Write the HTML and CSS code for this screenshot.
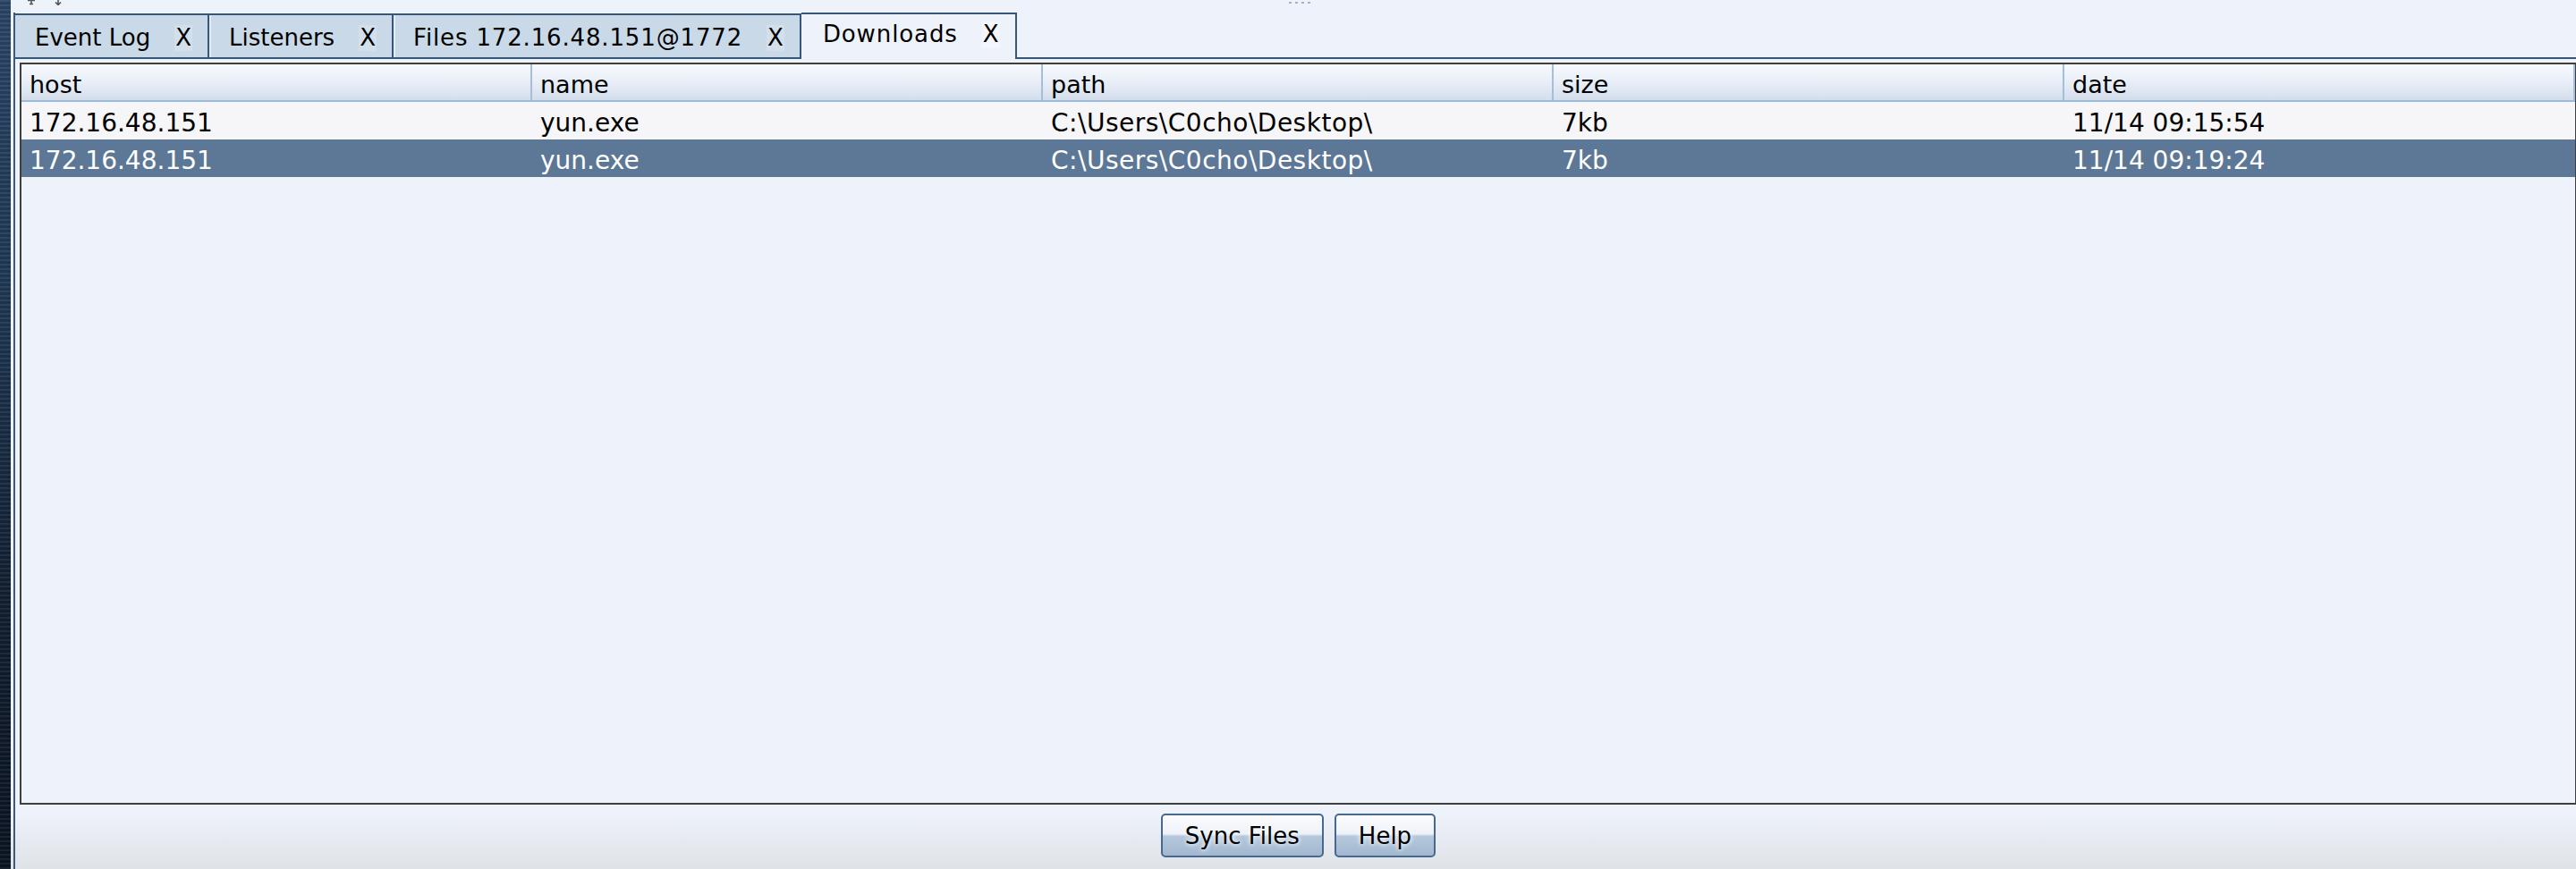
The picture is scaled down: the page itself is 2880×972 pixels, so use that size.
FILE: index.html
```html
<!DOCTYPE html>
<html>
<head>
<meta charset="utf-8">
<title>Downloads</title>
<link rel="stylesheet" href="styles.css">
</head>
<body>
<div class="desk"></div>
<div class="app">
  <div class="topbar">
    <div class="tools">
      <svg class="tool" width="10" height="6" viewBox="0 0 10 6"><path d="M1 0.5h8M5 0.5v4M3 4.5h4" stroke="#555" stroke-width="1.6" fill="none"/></svg>
      <svg class="tool" width="10" height="6" viewBox="0 0 10 6"><path d="M5 0v4M2 2.5l3 3 3-3" stroke="#555" stroke-width="1.6" fill="none"/></svg>
    </div>
    <div class="grip"><i></i><i></i><i></i><i></i></div>
    <div></div>
  </div>
  <div class="tabpane">
    <div class="tabs">
      <div class="tab"><span>Event Log</span><span class="x">X</span></div>
      <div class="tab"><span>Listeners</span><span class="x">X</span></div>
      <div class="tab tab-files"><span>Files 172.16.48.151@1772</span><span class="x">X</span></div>
      <div class="tab active"><span>Downloads</span><span class="x">X</span></div>
      <div class="tabfill"></div>
    </div>
    <div class="content">
      <div class="table">
        <div class="thead">
          <div class="th">host</div>
          <div class="th">name</div>
          <div class="th">path</div>
          <div class="th">size</div>
          <div class="th">date</div>
        </div>
        <div class="row">
          <div class="td">172.16.48.151</div>
          <div class="td">yun.exe</div>
          <div class="td path">C:\Users\C0cho\Desktop\</div>
          <div class="td">7kb</div>
          <div class="td">11/14 09:15:54</div>
        </div>
        <div class="row sel">
          <div class="td">172.16.48.151</div>
          <div class="td">yun.exe</div>
          <div class="td path">C:\Users\C0cho\Desktop\</div>
          <div class="td">7kb</div>
          <div class="td">11/14 09:19:24</div>
        </div>
      </div>
      <div class="actions">
        <button class="btn">Sync Files</button>
        <button class="btn">Help</button>
      </div>
    </div>
  </div>
</div>
</body>
</html>
```
FILE: styles.css
```css
html, body {
  margin: 0;
  height: 972px;
  overflow: hidden;
}
body {
  display: flex;
  background: #eef2fa;
  font-family: "DejaVu Sans", "Noto Sans", sans-serif;
  color: #000;
}
.desk {
  width: 12px;
  flex-shrink: 0;
  background:
    repeating-linear-gradient(to bottom, rgba(255,255,255,0.06) 0 2px, rgba(0,0,0,0.08) 2px 5px),
    linear-gradient(to bottom, #2b4666 0%, #1f3754 35%, #121f31 70%, #0b1422 100%);
}
.app {
  flex: 1;
  min-width: 0;
  display: flex;
  flex-direction: column;
  padding-left: 3px;
  background: linear-gradient(to bottom, #eef2fa calc(100% - 62px), #e5e8ee calc(100% - 26px), #dfe2e7 100%);
}
.topbar {
  height: 14px;
  flex-shrink: 0;
  display: grid;
  grid-template-columns: 1fr auto 1fr;
  align-items: start;
}
.tools {
  display: flex;
  gap: 20px;
  padding-left: 15px;
}
.tool { display: block; }
.grip {
  display: flex;
  gap: 4px;
  padding-top: 2px;
  margin-left: 10px;
}
.grip i {
  width: 3px;
  height: 2px;
  background: #a9b1bd;
}
.tabpane {
  flex: 1;
  min-height: 0;
  display: flex;
  flex-direction: column;
  border-left: 2px solid #3b5a7d;
}
.tabs {
  display: flex;
  height: 52px;
  flex-shrink: 0;
  align-items: flex-end;
}
.tab {
  box-sizing: border-box;
  height: 51px;
  display: flex;
  align-items: center;
  gap: 27px;
  padding: 3px 17px 0 22px;
  background: #c9d9e8;
  border-top: 2px solid #36567a;
  border-right: 2px solid #36567a;
  border-bottom: 2px solid #36567a;
  font-size: 26px;
  white-space: nowrap;
}
.tab + .tab {
  box-shadow: inset 2px 0 0 #e2ebf4;
}
.tab-files > span:first-child {
  letter-spacing: 0.85px;
}
.x {
  line-height: 29px;
  padding: 0 1px;
  background: #d3e0ec;
}
.tab.active {
  height: 52px;
  background: #eef2fa;
  border-bottom: none;
  box-shadow: none;
  padding: 0 17px 6px 24px;
}
.tab.active > span:first-child {
  letter-spacing: 0.9px;
}
.tab.active .x {
  background: #f3f6fc;
}
.tabfill {
  flex: 1;
  height: 2px;
  background: #36567a;
}
.content {
  flex: 1;
  min-height: 0;
  display: flex;
  flex-direction: column;
  padding: 4px 0 0 5px;
}
.table {
  flex: 1;
  min-height: 0;
  width: 2859px;
  flex-shrink: 0;
  box-sizing: border-box;
  border: 2px solid #3f3f3f;
  display: flex;
  flex-direction: column;
}
.thead, .row {
  display: grid;
  grid-template-columns: repeat(5, 571px);
}
.thead {
  border-bottom: 2px solid #9dbbd8;
}
.th {
  box-sizing: border-box;
  height: 40px;
  line-height: 34px;
  padding: 6px 0 0 9px;
  border-right: 2px solid #a5bfdb;
  background: linear-gradient(to bottom, #f7faff 0%, #e8eef7 50%, #d3deeb 100%);
  font-size: 27px;
}
.row {
  background: #f6f6f8;
}
.row.sel {
  background: #5d7896;
  color: #fff;
}
.td {
  box-sizing: border-box;
  height: 42px;
  line-height: 36px;
  padding: 6px 0 0 9px;
  font-size: 28px;
  white-space: nowrap;
}
.td.path {
  letter-spacing: 0.5px;
}
.actions {
  width: 2859px;
  height: 72px;
  flex-shrink: 0;
  box-sizing: border-box;
  padding-top: 10px;
  display: flex;
  justify-content: center;
  align-items: flex-start;
  gap: 12px;
}
.btn {
  height: 49px;
  box-sizing: border-box;
  padding: 0 25px;
  border: 2px solid #48698d;
  border-radius: 5px;
  background: linear-gradient(to bottom, #fbfcfe 0%, #eef2f8 46%, #b4c7dc 52%, #a2b8d0 100%);
  font-family: "DejaVu Sans", "Noto Sans", sans-serif;
  font-size: 26px;
  color: #000;
  text-shadow: 0 0 4px #f4f7fb, 0 0 6px #f4f7fb;
}
```
